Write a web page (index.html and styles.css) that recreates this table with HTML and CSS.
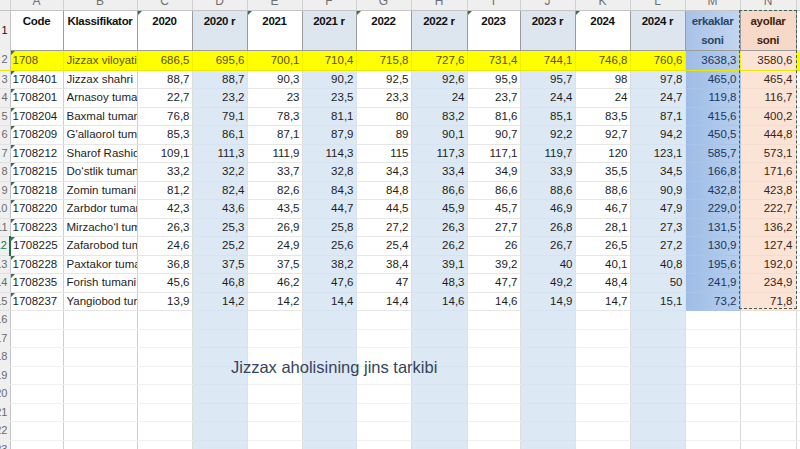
FILE: index.html
```html
<!DOCTYPE html>
<html>
<head>
<meta charset="utf-8">
<link rel="stylesheet" href="styles.css">
</head>
<body>
<table class="sheet">
<colgroup>
<col class="c-rh"><col class="c-a"><col class="c-b"><col class="c-n55"><col class="c-n55"><col class="c-n55"><col class="c-n54"><col class="c-n55"><col class="c-n56"><col class="c-n53"><col class="c-n55"><col class="c-n55"><col class="c-n55"><col class="c-n55"><col class="c-n56"><col class="c-x">
</colgroup>
<tr class="letters"><td class="rh"></td><td><span>A</span></td><td><span>B</span></td><td><span>C</span></td><td><span>D</span></td><td><span>E</span></td><td><span>F</span></td><td><span>G</span></td><td><span>H</span></td><td><span>I</span></td><td><span>J</span></td><td><span>K</span></td><td><span>L</span></td><td><span>M</span></td><td><span>N</span></td><td></td></tr>
<tr class="head"><td class="rh"><span>1</span></td><td>Code</td><td>Klassifikator</td><td class="tri">2020</td><td>2020 r</td><td class="tri">2021</td><td>2021 r</td><td class="tri">2022</td><td>2022 r</td><td class="tri">2023</td><td>2023 r</td><td class="tri">2024</td><td>2024 r</td><td>erkaklar<br>soni</td><td>ayollar<br>soni</td><td></td></tr>
<tr class="total"><td class="rh"><span>2</span></td><td class="tri">1708</td><td><span class="clip">Jizzax viloyati</span></td><td>686,5</td><td>695,6</td><td>700,1</td><td>710,4</td><td>715,8</td><td>727,6</td><td>731,4</td><td>744,1</td><td>746,8</td><td>760,6</td><td>3638,3</td><td>3580,6</td><td></td></tr>
<tr><td class="rh"><span>3</span></td><td class="tri">1708401</td><td><span class="clip">Jizzax shahri</span></td><td>88,7</td><td>88,7</td><td>90,3</td><td>90,2</td><td>92,5</td><td>92,6</td><td>95,9</td><td>95,7</td><td>98</td><td>97,8</td><td>465,0</td><td>465,4</td><td></td></tr>
<tr><td class="rh"><span>4</span></td><td class="tri">1708201</td><td><span class="clip">Arnasoy tumani</span></td><td>22,7</td><td>23,2</td><td>23</td><td>23,5</td><td>23,3</td><td>24</td><td>23,7</td><td>24,4</td><td>24</td><td>24,7</td><td>119,8</td><td>116,7</td><td></td></tr>
<tr><td class="rh"><span>5</span></td><td class="tri">1708204</td><td><span class="clip">Baxmal tumani</span></td><td>76,8</td><td>79,1</td><td>78,3</td><td>81,1</td><td>80</td><td>83,2</td><td>81,6</td><td>85,1</td><td>83,5</td><td>87,1</td><td>415,6</td><td>400,2</td><td></td></tr>
<tr><td class="rh"><span>6</span></td><td class="tri">1708209</td><td><span class="clip">G'allaorol tumani</span></td><td>85,3</td><td>86,1</td><td>87,1</td><td>87,9</td><td>89</td><td>90,1</td><td>90,7</td><td>92,2</td><td>92,7</td><td>94,2</td><td>450,5</td><td>444,8</td><td></td></tr>
<tr><td class="rh"><span>7</span></td><td class="tri">1708212</td><td><span class="clip">Sharof Rashidov tumani</span></td><td>109,1</td><td>111,3</td><td>111,9</td><td>114,3</td><td>115</td><td>117,3</td><td>117,1</td><td>119,7</td><td>120</td><td>123,1</td><td>585,7</td><td>573,1</td><td></td></tr>
<tr><td class="rh"><span>8</span></td><td class="tri">1708215</td><td><span class="clip">Do‘stlik tumani</span></td><td>33,2</td><td>32,2</td><td>33,7</td><td>32,8</td><td>34,3</td><td>33,4</td><td>34,9</td><td>33,9</td><td>35,5</td><td>34,5</td><td>166,8</td><td>171,6</td><td></td></tr>
<tr><td class="rh"><span>9</span></td><td class="tri">1708218</td><td><span class="clip">Zomin tumani</span></td><td>81,2</td><td>82,4</td><td>82,6</td><td>84,3</td><td>84,8</td><td>86,6</td><td>86,6</td><td>88,6</td><td>88,6</td><td>90,9</td><td>432,8</td><td>423,8</td><td></td></tr>
<tr><td class="rh"><span>10</span></td><td class="tri">1708220</td><td><span class="clip">Zarbdor tumani</span></td><td>42,3</td><td>43,6</td><td>43,5</td><td>44,7</td><td>44,5</td><td>45,9</td><td>45,7</td><td>46,9</td><td>46,7</td><td>47,9</td><td>229,0</td><td>222,7</td><td></td></tr>
<tr><td class="rh"><span>11</span></td><td class="tri">1708223</td><td><span class="clip">Mirzacho‘l tumani</span></td><td>26,3</td><td>25,3</td><td>26,9</td><td>25,8</td><td>27,2</td><td>26,3</td><td>27,7</td><td>26,8</td><td>28,1</td><td>27,3</td><td>131,5</td><td>136,2</td><td></td></tr>
<tr><td class="rh sel"><span>12</span></td><td class="tri">1708225</td><td><span class="clip">Zafarobod tumani</span></td><td>24,6</td><td>25,2</td><td>24,9</td><td>25,6</td><td>25,4</td><td>26,2</td><td>26</td><td>26,7</td><td>26,5</td><td>27,2</td><td>130,9</td><td>127,4</td><td></td></tr>
<tr><td class="rh"><span>13</span></td><td class="tri">1708228</td><td><span class="clip">Paxtakor tumani</span></td><td>36,8</td><td>37,5</td><td>37,5</td><td>38,2</td><td>38,4</td><td>39,1</td><td>39,2</td><td>40</td><td>40,1</td><td>40,8</td><td>195,6</td><td>192,0</td><td></td></tr>
<tr><td class="rh"><span>14</span></td><td class="tri">1708235</td><td><span class="clip">Forish tumani</span></td><td>45,6</td><td>46,8</td><td>46,2</td><td>47,6</td><td>47</td><td>48,3</td><td>47,7</td><td>49,2</td><td>48,4</td><td>50</td><td>241,9</td><td>234,9</td><td></td></tr>
<tr><td class="rh"><span>15</span></td><td class="tri">1708237</td><td><span class="clip">Yangiobod tumani</span></td><td>13,9</td><td>14,2</td><td>14,2</td><td>14,4</td><td>14,4</td><td>14,6</td><td>14,6</td><td>14,9</td><td>14,7</td><td>15,1</td><td>73,2</td><td>71,8</td><td></td></tr>
<tr class="blank"><td class="rh"><span>16</span></td><td></td><td></td><td></td><td></td><td></td><td></td><td></td><td></td><td></td><td></td><td></td><td></td><td></td><td></td><td></td></tr>
<tr class="blank"><td class="rh"><span>17</span></td><td></td><td></td><td></td><td></td><td></td><td></td><td></td><td></td><td></td><td></td><td></td><td></td><td></td><td></td><td></td></tr>
<tr class="blank"><td class="rh"><span>18</span></td><td></td><td></td><td></td><td></td><td></td><td></td><td></td><td></td><td></td><td></td><td></td><td></td><td></td><td></td><td></td></tr>
<tr class="blank"><td class="rh"><span>19</span></td><td></td><td></td><td></td><td></td><td></td><td></td><td></td><td></td><td></td><td></td><td></td><td></td><td></td><td></td><td></td></tr>
<tr class="blank"><td class="rh"><span>20</span></td><td></td><td></td><td></td><td></td><td></td><td></td><td></td><td></td><td></td><td></td><td></td><td></td><td></td><td></td><td></td></tr>
<tr class="blank"><td class="rh"><span>21</span></td><td></td><td></td><td></td><td></td><td></td><td></td><td></td><td></td><td></td><td></td><td></td><td></td><td></td><td></td><td></td></tr>
<tr class="blank"><td class="rh"><span>22</span></td><td></td><td></td><td></td><td></td><td></td><td></td><td></td><td></td><td></td><td></td><td></td><td></td><td></td><td></td><td></td></tr>
<tr class="blank"><td class="rh"><span>23</span></td><td></td><td></td><td></td><td></td><td></td><td></td><td></td><td></td><td></td><td></td><td></td><td></td><td></td><td></td><td></td></tr>
</table>
<div class="marquee"></div>
<div class="chart-title">Jizzax aholisining jins tarkibi</div>
</body>
</html>
```
FILE: styles.css
```css
* { box-sizing: border-box; }
html, body { margin: 0; padding: 0; background: #fff; overflow: hidden; }
body {
  width: 800px; height: 449px; position: relative;
  font-family: "Liberation Sans", Arial, sans-serif;
  font-size: 11.5px; color: #1e1e1e;
}
.sheet { border-collapse: collapse; table-layout: fixed; width: 800px; }
.c-rh { width: 10px; }
.c-a { width: 53px; }
.c-b { width: 74px; }
.c-n53 { width: 53px; }
.c-n54 { width: 54px; }
.c-n55 { width: 55px; }
.c-n56 { width: 56px; }
.c-x { width: 4px; }

.sheet td {
  padding: 0; overflow: hidden; white-space: nowrap;
  height: 18.5px; line-height: 17px;
  border-right: 1px solid #dcdcdc;
  border-bottom: 1px solid #e6e6e6;
  background: #fff;
}
.sheet td:nth-child(n+4) { text-align: right; padding-right: 2px; }
.sheet td:nth-child(2) { padding-left: 2px; border-right-color: #cfcfcf; }
.sheet td:nth-child(3) { padding-left: 3px; border-right-color: #cfcfcf; }
.clip { display: block; width: 70px; overflow: hidden; }

/* light blue "r" columns */
.sheet td:nth-child(2n+5):nth-child(-n+13) {
  background: #dce8f4; border-bottom-color: #d6e3f1; border-right-color: #d6e3f1;
}
/* erkaklar column */
.sheet td:nth-child(14) {
  background: linear-gradient(to right, #9dbce6, #b7cfee);
  color: #1c3561; padding-right: 3px;
  border-bottom-color: #a9c4e8; border-right-color: #a9c4e8;
}
/* ayollar column */
.sheet td:nth-child(15) {
  background: #fbe3d6; color: #3a2518; padding-right: 3px;
  border-bottom-color: #f6dccd;
}

/* row header column */
.sheet td.rh {
  background: #efefef; color: #6a6a6a; font-size: 11px;
  border-right: 1px solid #c4c4c4; border-bottom-color: #e2e2e2;
  padding: 0; text-align: left;
}
.sheet td.rh span { display: block; margin-left: -18px; text-align: right; padding-right: 2px; }
.sheet td.rh.sel { border-right: 2px solid #217346; color: #217346; }

/* column letters */
.sheet tr.letters td:nth-child(n) {
  height: 10px; line-height: 14px; background: #efefef; color: #707070;
  font-size: 12px; text-align: center; padding: 0;
  border-right: 1px solid #d0d0d0; border-bottom: 1px solid #c4c4c4;
}
.sheet tr.letters td span { display: block; margin-top: -7px; }

/* header row */
.sheet tr.head td:nth-child(n) {
  height: 37px; vertical-align: top; text-align: center; font-weight: bold;
  letter-spacing: -0.3px; line-height: 19px; padding: 1px 0 0;
  background: #fff; color: #111;
  border: 1px solid #9c9c9c;
}
.sheet tr.head td:nth-child(2n+5):nth-child(-n+13) { background: #dde6ef; }
.sheet tr.head td:nth-child(14) {
  background: linear-gradient(to right, #a7c2e7, #c2d6f0); color: #2c4566;
}
.sheet tr.head td:nth-child(15) { background: #f7d9c8; color: #3f230f; }
.sheet tr.head td:nth-child(16) { border: none; border-bottom: 1px solid #e6e6e6; }
.sheet tr.head td.rh { font-weight: normal; letter-spacing: 0; background: #efefef; border: none; border-right: 1px solid #c4c4c4; vertical-align: middle; line-height: 37px; padding: 0; }

/* total (yellow) row */
.sheet tr.total td:nth-child(n) {
  height: 20px; background: #ffff00; color: #5c4f00; border-bottom-color: #e8e800; border-right-color: #f0f000;
}
.sheet tr.total td:nth-child(14) { background: linear-gradient(to right, #9dbce6, #b7cfee); color: #1c3561; }
.sheet tr.total td:nth-child(15) { background: #fbe3d6; color: #3a2518; }
.sheet tr.total td.rh { background: #efefef; color: #6a6a6a; border-right-color: #c4c4c4; }

/* empty rows below the data */
.sheet tr.blank td:nth-child(14),
.sheet tr.blank td:nth-child(15) { background: #fff; border-bottom-color: #efefef; border-right-color: #d8d8d8; }
.sheet tr.blank td { border-bottom-color: #efefef; }

/* "number stored as text" markers */
.sheet td.tri { position: relative; }
.sheet td.tri::before {
  content: ""; position: absolute; left: 0; top: 0;
  border-top: 4px solid #3b6e4b; border-right: 4px solid transparent;
}

/* copy selection marquee around the ayollar column */
.marquee {
  position: absolute; left: 739px; top: 10px; width: 58px; height: 299px;
  border: 1px dashed #44604f; pointer-events: none;
}

.chart-title {
  position: absolute; left: 231px; top: 358px;
  font-family: "Liberation Sans", Arial, sans-serif;
  font-size: 16.5px; color: #38445a;
}
```
